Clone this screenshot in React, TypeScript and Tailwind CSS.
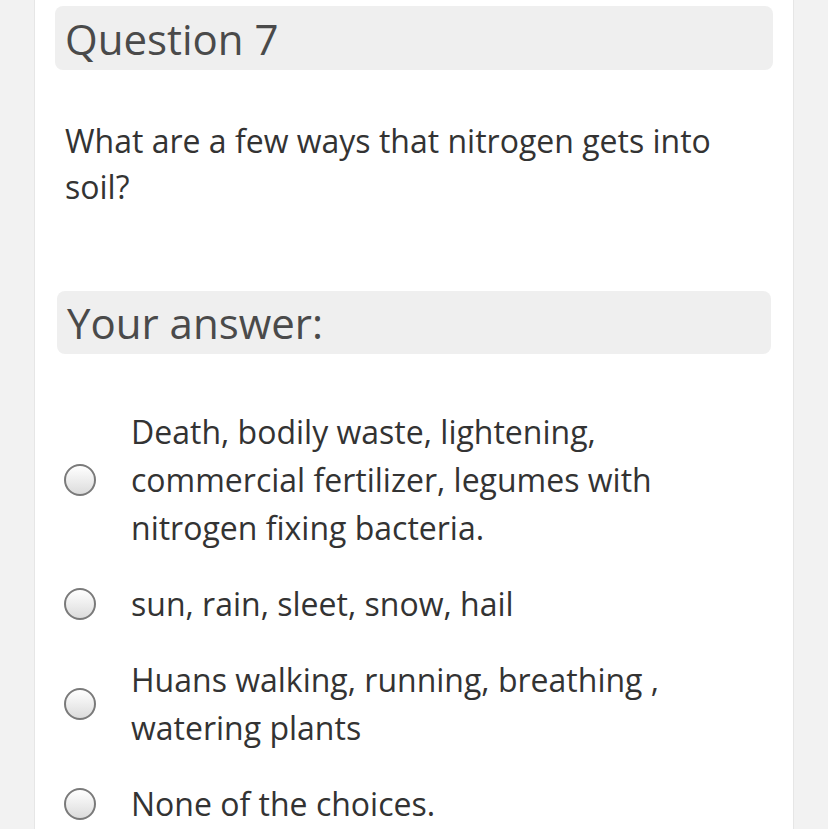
import React from "react";

const options: string[][] = [
  ["Death, bodily waste, lightening,", "commercial fertilizer, legumes with", "nitrogen fixing bacteria."],
  ["sun, rain, sleet, snow, hail"],
  ["Huans walking, running, breathing ,", "watering plants"],
  ["None of the choices."],
];

const Radio: React.FC = () => (
  <span className="block w-[32px] h-[32px] shrink-0 rounded-full border-2 border-[#7a7a7a] bg-gradient-to-b from-white to-[#dcdcdc]" />
);

const App: React.FC = () => {
  return (
    <div className="h-[829px] w-full overflow-hidden bg-[#f2f2f2] font-['Open_Sans',sans-serif]">
      <div className="mx-[34px] h-full border-x border-[#e6e6e6] bg-white px-[20px] pt-[6px]">
        <div className="flex h-[64px] items-center rounded-[8px] bg-[#efefef] px-[10px] text-[42px] text-[#4a4a4a]">
          Question 7
        </div>
        <div className="mt-[48px] px-[10px] text-[32px] leading-[46px] text-[#333333]">
          What are a few ways that nitrogen gets into
          <br />
          soil?
        </div>
        <div className="mx-[2px] mt-[81px] flex h-[63px] items-center rounded-[8px] bg-[#efefef] px-[10px] text-[42px] text-[#4a4a4a]">
          Your answer:
        </div>
        <div className="mt-[54px] flex flex-col gap-[28px] px-[9px]">
          {options.map((lines, i) => (
            <div key={i} className="flex items-center gap-[35px]">
              <Radio />
              <div className="text-[32px] leading-[48px] text-[#333333]">
                {lines.map((l, j) => (
                  <div key={j}>{l}</div>
                ))}
              </div>
            </div>
          ))}
        </div>
      </div>
    </div>
  );
};

export default App;
